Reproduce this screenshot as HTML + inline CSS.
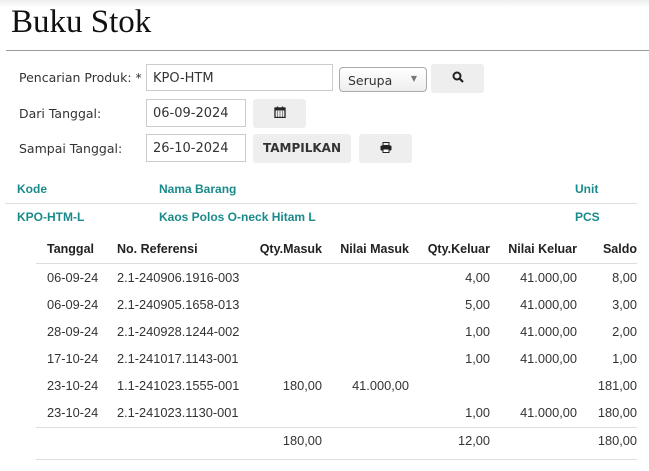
<!DOCTYPE html><html><head><style>
body{margin:0;width:649px;height:471px;background:#fff;font-family:"DejaVu Sans","Liberation Sans",sans-serif;font-size:12.5px;color:#333;position:relative;overflow:hidden}
.a{position:absolute;white-space:nowrap}
.d{font-family:"Liberation Sans",sans-serif;font-size:12.8px}
.top{position:absolute;left:0;top:0;width:649px;height:8px;background:linear-gradient(#eee,#fff)}
h1{position:absolute;left:11px;top:4px;margin:0;font-family:"Liberation Serif",serif;font-weight:normal;font-size:33px;color:#111}
.hr{position:absolute;left:6px;width:643px;border-top:1px solid #999;top:50px}
.inp{position:absolute;border:1px solid #ccc;height:26px;box-sizing:border-box;padding:6px 6px 0;font-size:13px}
.btn{position:absolute;background:#eee;border-radius:3px;height:29px;box-sizing:border-box;text-align:center;line-height:29px;font-weight:bold;font-size:12px}
.t{color:#1a8a8a;font-weight:bold;font-family:"Liberation Sans",sans-serif;font-size:12px}
.h{font-weight:bold;font-family:"Liberation Sans",sans-serif;font-size:12.5px;color:#222}
.r{text-align:right}
.ln{position:absolute;border-top:1px solid #ddd}
</style></head><body>
<div class="top"></div>
<h1>Buku Stok</h1>
<div class="hr"></div>
<div class="a" style="left:19px;top:70px">Pencarian Produk: *</div>
<div class="inp" style="left:146px;top:64px;width:187px;height:27px">KPO-HTM</div>
<div class="a" style="left:339px;top:67px;width:88px;height:25px;border:1px solid #aaa;border-radius:4px;box-sizing:border-box;background:linear-gradient(#fff,#eee);padding:5px 8px 0">Serupa<span style="position:absolute;right:9px;top:6px;font-size:8px;color:#777">▼</span></div>
<div class="btn" style="left:431px;top:64px;width:53px"><svg width="12" height="12" viewBox="0 0 12 12" style="vertical-align:-1px"><circle cx="5" cy="5" r="3.5" fill="none" stroke="#222" stroke-width="2"/><line x1="7.5" y1="7.5" x2="11" y2="11" stroke="#222" stroke-width="2.2"/></svg></div>
<div class="a" style="left:19px;top:106px">Dari Tanggal:</div>
<div class="inp" style="left:146px;top:99px;width:100px;height:28px">06-09-2024</div>
<div class="btn" style="left:253px;top:99px;width:53px"><svg width="12" height="12" viewBox="0 0 12 12" style="vertical-align:-1px"><rect x="1" y="2" width="10" height="9.5" fill="none" stroke="#222" stroke-width="1.3"/><rect x="1" y="2" width="10" height="2.5" fill="#222"/><path d="M3 6h1M5.5 6h1M8 6h1M3 8h1M5.5 8h1M8 8h1M3 10h1M5.5 10h1M8 10h1" stroke="#222"/><path d="M3.5 0.5v2M8.5 0.5v2" stroke="#222" stroke-width="1.3"/></svg></div>
<div class="a" style="left:19px;top:141px">Sampai Tanggal:</div>
<div class="inp" style="left:146px;top:134px;width:100px;height:28px">26-10-2024</div>
<div class="btn" style="left:253px;top:134px;width:98px">TAMPILKAN</div>
<div class="btn" style="left:359px;top:134px;width:53px"><svg width="12" height="11" viewBox="0 0 12 11" style="vertical-align:-1px"><rect x="3" y="0.5" width="6" height="3" fill="none" stroke="#222"/><rect x="0.5" y="3.5" width="11" height="5" rx="1" fill="#222"/><rect x="3" y="7" width="6" height="3.5" fill="#fff" stroke="#222"/></svg></div>
<div class="a t" style="left:17px;top:182px">Kode</div>
<div class="a t" style="left:159px;top:182px">Nama Barang</div>
<div class="a t" style="left:575px;top:182px">Unit</div>
<div class="ln" style="left:5px;width:632px;top:203px"></div>
<div class="a t" style="left:17px;top:210px">KPO-HTM-L</div>
<div class="a t" style="left:159px;top:210px">Kaos Polos O-neck Hitam L</div>
<div class="a t" style="left:575px;top:210px">PCS</div>
<div class="a h" style="left:47px;top:242px">Tanggal</div>
<div class="a h" style="left:117px;top:242px">No. Referensi</div>
<div class="a h r" style="right:327px;top:242px">Qty.Masuk</div>
<div class="a h r" style="right:240px;top:242px">Nilai Masuk</div>
<div class="a h r" style="right:159px;top:242px">Qty.Keluar</div>
<div class="a h r" style="right:72px;top:242px">Nilai Keluar</div>
<div class="a h r" style="right:12px;top:242px">Saldo</div>
<div class="ln" style="left:36px;width:601px;top:263px"></div>
<div class="ln" style="left:36px;width:601px;top:427px"></div>
<div class="a d" style="right:327px;top:433px">180,00</div>
<div class="a d" style="right:159px;top:433px">12,00</div>
<div class="a d" style="right:12px;top:433px">180,00</div>
<div class="ln" style="left:36px;width:601px;top:459px"></div>

<div class="a d" style="left:47px;top:270px">06-09-24</div><div class="a d" style="left:117px;top:270px">2.1-240906.1916-003</div><div class="a d" style="right:159px;top:270px">4,00</div><div class="a d" style="right:72px;top:270px">41.000,00</div><div class="a d" style="right:12px;top:270px">8,00</div>
<div class="a d" style="left:47px;top:297px">06-09-24</div><div class="a d" style="left:117px;top:297px">2.1-240905.1658-013</div><div class="a d" style="right:159px;top:297px">5,00</div><div class="a d" style="right:72px;top:297px">41.000,00</div><div class="a d" style="right:12px;top:297px">3,00</div>
<div class="a d" style="left:47px;top:324px">28-09-24</div><div class="a d" style="left:117px;top:324px">2.1-240928.1244-002</div><div class="a d" style="right:159px;top:324px">1,00</div><div class="a d" style="right:72px;top:324px">41.000,00</div><div class="a d" style="right:12px;top:324px">2,00</div>
<div class="a d" style="left:47px;top:351px">17-10-24</div><div class="a d" style="left:117px;top:351px">2.1-241017.1143-001</div><div class="a d" style="right:159px;top:351px">1,00</div><div class="a d" style="right:72px;top:351px">41.000,00</div><div class="a d" style="right:12px;top:351px">1,00</div>
<div class="a d" style="left:47px;top:378px">23-10-24</div><div class="a d" style="left:117px;top:378px">1.1-241023.1555-001</div><div class="a d" style="right:327px;top:378px">180,00</div><div class="a d" style="right:240px;top:378px">41.000,00</div><div class="a d" style="right:12px;top:378px">181,00</div>
<div class="a d" style="left:47px;top:405px">23-10-24</div><div class="a d" style="left:117px;top:405px">2.1-241023.1130-001</div><div class="a d" style="right:159px;top:405px">1,00</div><div class="a d" style="right:72px;top:405px">41.000,00</div><div class="a d" style="right:12px;top:405px">180,00</div>
</body></html>
